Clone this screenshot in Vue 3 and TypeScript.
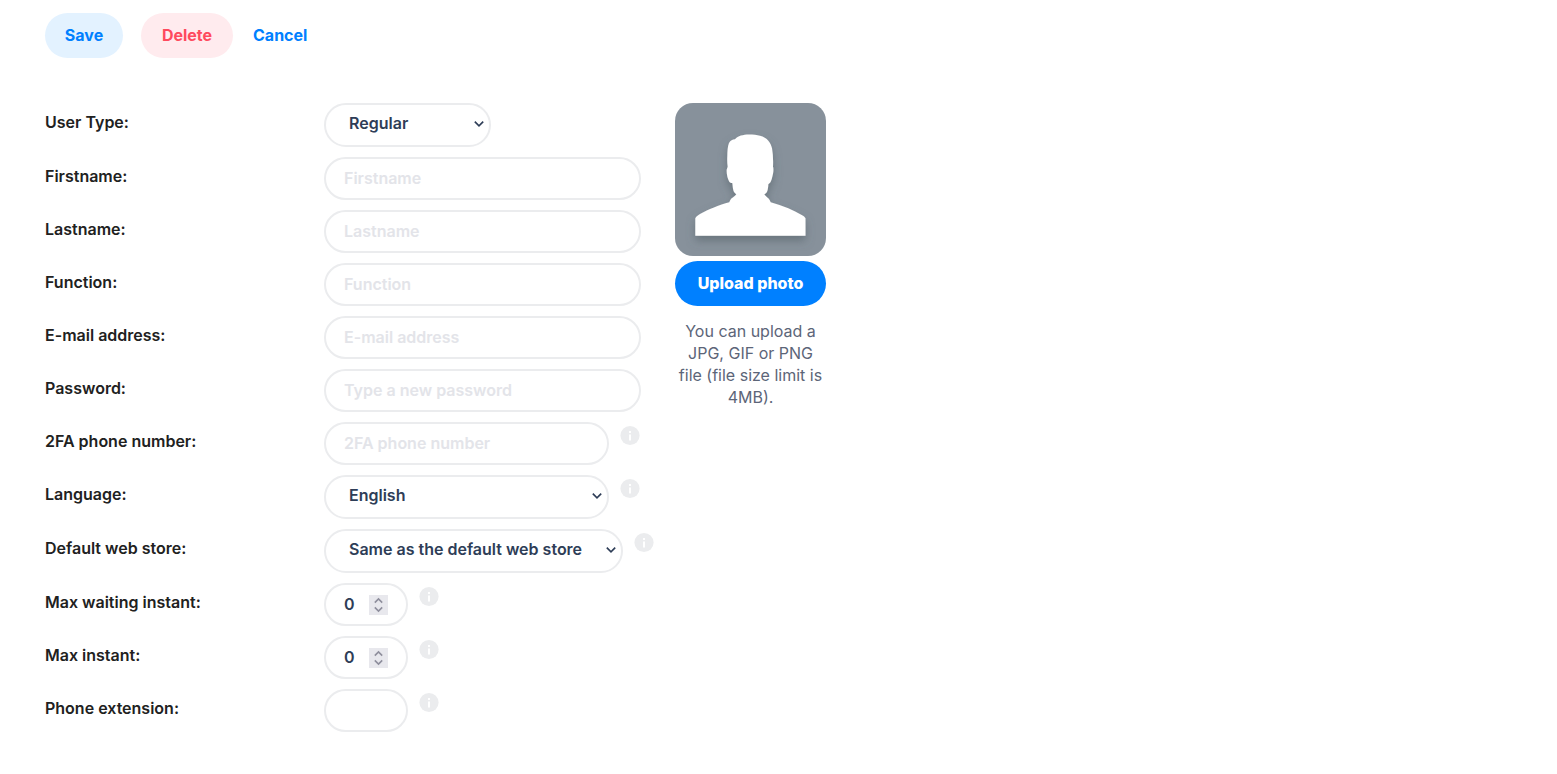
<script setup lang="ts">
import { reactive } from 'vue'

type Kind = 'select' | 'text' | 'email' | 'password' | 'tel' | 'number'
type Size = 'full' | 'wide' | 'store' | 'medium' | 'small'

interface Field {
  id: string
  label: string
  kind: Kind
  size: Size
  placeholder?: string
  options?: string[]
  info?: boolean
}

const fields: Field[] = [
  { id: 'userType', label: 'User Type:', kind: 'select', size: 'medium', options: ['Regular'] },
  { id: 'firstname', label: 'Firstname:', kind: 'text', size: 'full', placeholder: 'Firstname' },
  { id: 'lastname', label: 'Lastname:', kind: 'text', size: 'full', placeholder: 'Lastname' },
  { id: 'function', label: 'Function:', kind: 'text', size: 'full', placeholder: 'Function' },
  { id: 'email', label: 'E-mail address:', kind: 'email', size: 'full', placeholder: 'E-mail address' },
  { id: 'password', label: 'Password:', kind: 'password', size: 'full', placeholder: 'Type a new password' },
  { id: 'phone', label: '2FA phone number:', kind: 'tel', size: 'wide', placeholder: '2FA phone number', info: true },
  { id: 'language', label: 'Language:', kind: 'select', size: 'wide', options: ['English'], info: true },
  { id: 'store', label: 'Default web store:', kind: 'select', size: 'store', options: ['Same as the default web store'], info: true },
  { id: 'maxWaiting', label: 'Max waiting instant:', kind: 'number', size: 'small', info: true },
  { id: 'maxInstant', label: 'Max instant:', kind: 'number', size: 'small', info: true },
  { id: 'extension', label: 'Phone extension:', kind: 'text', size: 'small', info: true },
]

const values = reactive<Record<string, string | number>>({
  userType: 'Regular',
  firstname: '',
  lastname: '',
  function: '',
  email: '',
  password: '',
  phone: '',
  language: 'English',
  store: 'Same as the default web store',
  maxWaiting: 0,
  maxInstant: 0,
  extension: '',
})

function step(id: string, delta: number) {
  values[id] = Math.max(0, Number(values[id]) + delta)
}
</script>

<template>
  <form class="page" @submit.prevent>
    <div class="actions">
      <button class="btn save" type="submit">Save</button>
      <button class="btn delete" type="button">Delete</button>
      <a class="cancel" href="#">Cancel</a>
    </div>

    <div class="content">
      <div class="fields">
        <div v-for="f in fields" :key="f.id" class="row">
          <label class="label" :for="f.id">{{ f.label }}</label>
          <div class="control" :class="f.size">
            <template v-if="f.kind === 'select'">
              <select :id="f.id" v-model="values[f.id]" class="box select">
                <option v-for="o in f.options" :key="o">{{ o }}</option>
              </select>
              <svg class="chevron" viewBox="0 0 12 8" aria-hidden="true">
                <path d="M1.8 1.6 L6 5.9 L10.2 1.6" />
              </svg>
            </template>
            <template v-else>
              <input
                :id="f.id"
                v-model="values[f.id]"
                class="box input"
                :type="f.kind"
                :placeholder="f.placeholder"
              />
              <div v-if="f.kind === 'number'" class="spinner">
                <button type="button" aria-label="Increase" @click="step(f.id, 1)">
                  <svg viewBox="0 0 19 10" aria-hidden="true"><path d="M5.8 7.6 L9.5 3.9 L13.2 7.6" /></svg>
                </button>
                <button type="button" aria-label="Decrease" @click="step(f.id, -1)">
                  <svg viewBox="0 0 19 10" aria-hidden="true"><path d="M5.8 2.4 L9.5 6.1 L13.2 2.4" /></svg>
                </button>
              </div>
            </template>
          </div>
          <svg v-if="f.info" class="info" viewBox="0 0 20 20" aria-hidden="true">
            <circle cx="10" cy="9.5" r="9.6" fill="#ebecee" />
            <rect x="9" y="5" width="2" height="2" fill="#fff" />
            <rect x="9" y="8.5" width="2" height="6" fill="#fff" />
          </svg>
        </div>
      </div>

      <aside class="photo">
        <svg class="avatar" viewBox="0 0 151 153" role="img" aria-label="Profile photo">
          <defs>
            <filter id="soft" x="-20%" y="-20%" width="140%" height="140%">
              <feDropShadow dx="0" dy="5" stdDeviation="4" flood-color="#56626b" flood-opacity="0.6" />
            </filter>
          </defs>
          <rect width="151" height="153" fill="#87919b" />
          <path
            filter="url(#soft)"
            fill="#fff"
            d="M20.3 132.8 V115.300 C21 113.500 23 112.200 25 111 C29.500 108.500 34 106.300 38.300 104.700 C44 102.500 49.500 100.500 54.300 99.300 C55 97.500 55.700 96.300 56.700 95.300 C58.300 94.200 60 93.300 61.300 91.300 C59.500 90 58.700 88.800 58.300 87 C57.700 84.500 57.700 82 57.300 80 C56 80 55 79.500 54.300 78.700 C52.500 75.500 51.500 71 51.700 67 C51.800 65.500 52.500 64.800 52.700 63.500 C52.200 60.500 52.100 57 52.300 53.700 C52.400 48 52.600 43.500 54 40 C55.500 37.500 57.500 36.500 60 36.300 C63 32.800 68 31.600 74 31.500 C78 31.500 82 31.900 85 32.700 C88.500 33.700 91.500 35.300 93.300 37.700 C95.300 40 96.300 42.500 97 45.300 C98 51 98.300 57 98 63.500 C98.900 66.500 98.200 70.500 97.300 73.700 C96.700 76.500 96 78.500 95 79.700 L93.300 81.300 C93.200 84 93 86 92.300 88 C91.700 89.700 90.700 90.700 89.300 91.300 C90.500 93.300 92 94.200 93.300 95.300 C94.300 96.500 95 97.700 95.700 99.300 C101.500 101 107.500 103 113.300 105.300 C118 107.200 122.500 109.500 126.700 112 C128.500 113 130 114 130.500 115.300 V132.800 Z"
          />
        </svg>
        <button class="btn upload" type="button">Upload photo</button>
        <p class="hint">You can upload a JPG, GIF or PNG file (file size limit is 4MB).</p>
      </aside>
    </div>
  </form>
</template>

<style>
body {
  margin: 0;
  background: #fff;
}
</style>

<style scoped>
.page,
.page * {
  box-sizing: border-box;
}

.page {
  padding: 13px 45px 40px;
  font-family: Inter, "Open Sans", sans-serif;
  font-size: 16px;
  line-height: 22px;
  color: #212121;
}

.actions {
  display: flex;
  align-items: center;
}

.btn {
  height: 45px;
  padding: 0 0 2px;
  border: 0;
  border-radius: 23px;
  font: inherit;
  font-weight: 700;
  text-align: center;
  cursor: pointer;
}

.save {
  width: 78px;
  margin-right: 18px;
  background: #e3f2ff;
  color: #0080ff;
}

.delete {
  width: 92px;
  margin-right: 20px;
  background: #ffebee;
  color: #ff4a5d;
}

.cancel {
  padding-bottom: 2px;
  color: #0080ff;
  font-weight: 700;
  text-decoration: none;
}

.content {
  display: flex;
  align-items: flex-start;
  margin-top: 45px;
}

.fields {
  display: flex;
  flex-direction: column;
  gap: 10px;
  width: 630px;
}

.row {
  display: flex;
  align-items: flex-start;
}

.label {
  width: 279px;
  padding-top: 8px;
  font-weight: 600;
}

.control {
  position: relative;
}

.full {
  width: 317px;
}

.wide {
  width: 285px;
}

.store {
  width: 299px;
}

.medium {
  width: 167px;
}

.small {
  width: 84px;
}

.box {
  display: block;
  width: 100%;
  margin: 0;
  border: 2px solid #ebecee;
  border-radius: 22px;
  background: #fff;
  color: #2e3d57;
  font: inherit;
  font-weight: 600;
  outline: none;
  appearance: none;
}

.input {
  height: 43px;
  padding: 0 18px 2px;
}

.input[type="number"] {
  appearance: textfield;
}

.input[type="number"]::-webkit-inner-spin-button {
  display: none;
}

.input::placeholder {
  color: #e3e4e9;
  opacity: 1;
}

.select {
  height: 44px;
  padding: 0 22px 4px 23px;
}

.chevron {
  position: absolute;
  top: 17px;
  right: 6px;
  width: 12px;
  height: 8px;
  fill: none;
  stroke: #2e3d57;
  stroke-width: 1.6;
  pointer-events: none;
}

.spinner {
  position: absolute;
  top: 12px;
  right: 20px;
  display: flex;
  flex-direction: column;
  width: 19px;
  background: #e8e8ed;
}

.spinner button {
  height: 10px;
  padding: 0;
  border: 0;
  background: none;
}

.spinner svg {
  display: block;
  width: 19px;
  height: 10px;
  fill: none;
  stroke: #8f8f9d;
  stroke-width: 1.6;
}

.info {
  flex: none;
  width: 20px;
  height: 20px;
  margin: 4px 0 0 11px;
  overflow: visible;
}

.photo {
  width: 151px;
}

.avatar {
  display: block;
  width: 151px;
  height: 153px;
  border-radius: 18px;
}

.upload {
  width: 100%;
  margin-top: 5px;
  background: #0080ff;
  color: #fff;
  font-weight: 800;
}

.hint {
  margin: 14px 0 0;
  color: #5c6578;
  text-align: center;
}
</style>
